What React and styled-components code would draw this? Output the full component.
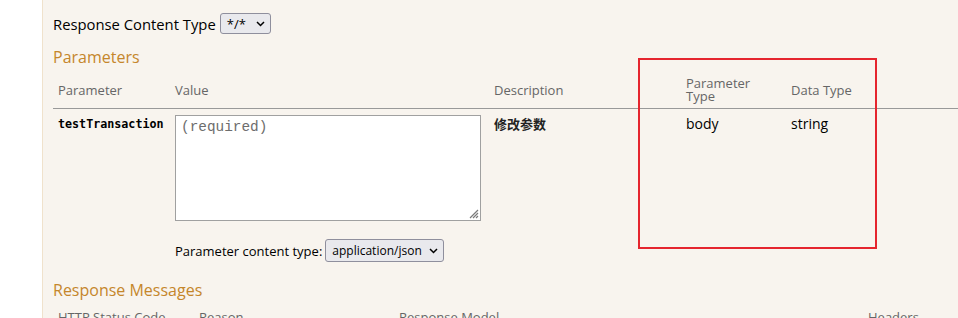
import styled, { createGlobalStyle } from 'styled-components';

const GlobalStyle = createGlobalStyle`
  html, body {
    margin: 0;
    padding: 0;
    background: #fff;
  }
  body {
    font-family: "Open Sans", "Noto Sans", sans-serif;
    overflow: hidden;
  }
`

const Page = styled.div`
  position: relative;
  width: 958px;
  height: 318px;
  overflow: hidden;
  display: flex;
`
const Gutter = styled.div`
  width: 42px;
  flex-shrink: 0;
  background: #fff;
`
const Panel = styled.div`
  flex: 1;
  background: #f8f4ee;
  border-left: 1px solid #f0e2cc;
  padding: 12px 0 0 10px;
`
const ContentTypeRow = styled.div`
  display: flex;
  align-items: center;
  gap: 4px;
  font-size: 14.8px;
  color: #000;
  height: 23px;
`
const Select = styled.div`
  display: inline-flex;
  align-items: center;
  gap: ${p => p.$gap || 10}px;
  height: ${p => p.$h || 21}px;
  padding: 0 5px 0 6px;
  border: 1px solid #8f8f9d;
  border-radius: 3px;
  background: #e9e9ed;
  font-size: ${p => p.$fs || 13}px;
  color: #000;
  box-sizing: border-box;
`
const SectionTitle = styled.h4`
  margin: ${p => p.$mt || 0}px 0 0 0;
  font-weight: 400;
  font-size: 16px;
  color: #c5862b;
  line-height: 22px;
`
const Table = styled.table`
  border-collapse: collapse;
  width: 960px;
  table-layout: fixed;
  margin-top: ${p => p.$mt || 0}px;
`
const Th = styled.th`
  text-align: left;
  font-weight: 400;
  font-size: 13px;
  color: #666;
  padding: 4px 5px 0 5px;
  vertical-align: middle;
  line-height: 13px;
  border-bottom: ${p => (p.$line ? '1px solid #999' : 'none')};
  height: ${p => p.$h || 'auto'};
`
const Td = styled.td`
  vertical-align: top;
  padding: 6px 5px 0 5px;
  font-size: 13px;
  color: #000;
`
const ParamName = styled.code`
  font-family: "DejaVu Sans Mono", "Liberation Mono", monospace;
  font-weight: 700;
  font-size: 11.7px;
  position: relative;
  top: -1px;
`
const TextArea = styled.div`
  position: relative;
  width: 306px;
  height: 106px;
  box-sizing: border-box;
  border: 1px solid #a0a0a0;
  background: #fff;
  padding: 3px 5px;
  font-family: "Liberation Mono", "Courier New", monospace;
  font-size: 14.4px;
  color: #6d6d6d;
`
const Grip = styled.svg`
  position: absolute;
  right: 1px;
  bottom: 1px;
`
const ContentTypeLine = styled.div`
  display: flex;
  align-items: center;
  gap: 3px;
  margin-top: 18px;
  font-size: 13px;
`
const Chinese = styled.strong`
  font-family: "Noto Sans CJK SC", sans-serif;
  font-size: 13px;
  font-weight: 700;
  color: #222;
  position: relative;
  top: -1px;
`
const Plain = styled.span`
  font-size: 14px;
  position: relative;
  top: -1px;
`
const Highlight = styled.div`
  position: absolute;
  left: 638px;
  top: 58px;
  width: 239px;
  height: 191px;
  box-sizing: border-box;
  border: 2px solid #e5252e;
`

const Chevron = () => (
  <svg width="9" height="6" viewBox="0 0 9 6">
    <path d="M1 1l3.5 3.5L8 1" fill="none" stroke="#000" strokeWidth="1.5" />
  </svg>
)

const App = () => {
  return (
    <>
      <GlobalStyle />
      <Page>
        <Gutter />
        <Panel>
          <ContentTypeRow>
            Response Content Type
            <Select>*/* <Chevron /></Select>
          </ContentTypeRow>
          <SectionTitle $mt={11}>Parameters</SectionTitle>
          <Table>
            <colgroup>
              <col style={{ width: 117 }} />
              <col style={{ width: 319 }} />
              <col style={{ width: 192 }} />
              <col style={{ width: 105 }} />
              <col />
            </colgroup>
            <thead>
              <tr>
                <Th $line $h="36px">Parameter</Th>
                <Th $line>Value</Th>
                <Th $line>Description</Th>
                <Th $line>Parameter<br />Type</Th>
                <Th $line>Data Type</Th>
              </tr>
            </thead>
            <tbody>
              <tr>
                <Td><ParamName>testTransaction</ParamName></Td>
                <Td>
                  <TextArea>
                    (required)
                    <Grip width="12" height="12" viewBox="0 0 12 12">
                      <path d="M11 3L3 11M11 6L6 11M11 9L9 11" stroke="#7a7a7a" strokeWidth="1.2" />
                    </Grip>
                  </TextArea>
                  <ContentTypeLine>
                    Parameter content type:
                    <Select $h={23} $gap={7} $fs={12}>application/json <Chevron /></Select>
                  </ContentTypeLine>
                </Td>
                <Td><Chinese>修改参数</Chinese></Td>
                <Td><Plain>body</Plain></Td>
                <Td><Plain>string</Plain></Td>
              </tr>
            </tbody>
          </Table>
          <SectionTitle $mt={17}>Response Messages</SectionTitle>
          <Table $mt={6}>
            <colgroup>
              <col style={{ width: 141 }} />
              <col style={{ width: 200 }} />
              <col style={{ width: 469 }} />
              <col />
            </colgroup>
            <thead>
              <tr>
                <Th>HTTP Status Code</Th>
                <Th>Reason</Th>
                <Th>Response Model</Th>
                <Th>Headers</Th>
              </tr>
            </thead>
          </Table>
        </Panel>
        <Highlight />
      </Page>
    </>
  )
}

export default App
